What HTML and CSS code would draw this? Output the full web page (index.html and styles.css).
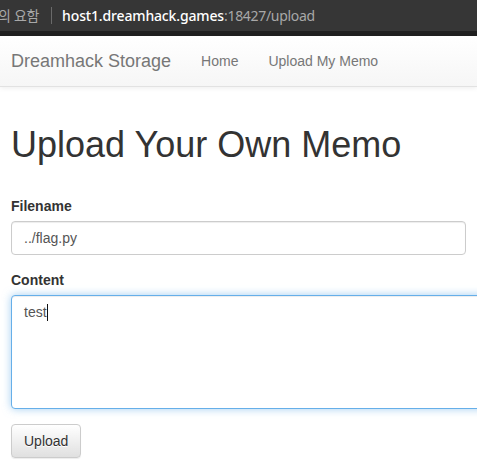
FILE: index.html
```html
<!DOCTYPE html>
<html lang="ko">
<head>
<meta charset="utf-8">
<title>Dreamhack Storage</title>
<link rel="stylesheet" href="styles.css">
</head>
<body>
<div class="browserbar">
  <div class="addr">
    <span class="dim">의 요함</span>
    <span class="sep"></span>
    <span class="host">host1.dreamhack.games</span><span class="dim">:18427/upload</span>
  </div>
</div>
<div class="browserstrip"></div>
<nav class="navbar">
  <a class="brand" href="#">Dreamhack Storage</a>
  <ul class="nav">
    <li><a href="#">Home</a></li>
    <li><a href="#">Upload My Memo</a></li>
  </ul>
</nav>
<main class="container">
  <h1>Upload Your Own Memo</h1>
  <form class="form">
    <div class="form-group">
      <label class="label" for="filename">Filename</label>
      <input class="input" id="filename" type="text" value="../flag.py">
    </div>
    <div class="form-group">
      <label class="label">Content</label>
      <div class="textarea focused" role="textbox">test<span class="caret"></span></div>
    </div>
    <button class="btn" type="button">Upload</button>
  </form>
</main>
</body>
</html>
```
FILE: styles.css
```css
* { box-sizing: border-box; }
html, body { margin: 0; padding: 0; }
body {
  width: 477px;
  height: 468px;
  overflow: hidden;
  background: #fff;
  font-family: "Liberation Sans", Arial, sans-serif;
  font-size: 14px;
  line-height: 20px;
  color: #333;
}
.browserbar {
  height: 31px;
  background: #363636;
  display: flex;
  align-items: center;
}
.addr {
  display: flex;
  align-items: center;
  font-family: "Noto Sans", "Noto Sans CJK KR", sans-serif;
  font-size: 14px;
  letter-spacing: -0.3px;
  white-space: nowrap;
  margin-left: -2px;
}
.addr .dim { color: #a8a8a8; }
.addr .host { color: #fff; font-weight: 500; letter-spacing: -0.15px; }
.addr .sep {
  width: 1px;
  height: 17px;
  background: #6a6a6a;
  margin: 0 10px 0 12px;
}
.browserstrip {
  height: 5px;
  background: #202020;
}
.navbar {
  height: 51px;
  display: flex;
  align-items: center;
  background: linear-gradient(to bottom, #fff 0, #f6f6f6 100%);
  border-bottom: 1px solid #e2e2e2;
  box-shadow: 0 1px 5px rgba(0,0,0,.075);
}
.brand {
  font-size: 18px;
  line-height: 20px;
  color: #777;
  text-decoration: none;
  margin-left: 11px;
  margin-right: 15px;
  padding: 15px 0;
}
.nav {
  list-style: none;
  margin: 0;
  padding: 0;
  display: flex;
}
.nav a {
  display: block;
  padding: 15px;
  color: #777;
  text-decoration: none;
}
.container {
  padding: 0 11px;
}
h1 {
  font-size: 36px;
  font-weight: 500;
  line-height: 1.1;
  margin: 38px 0 31px;
  color: #333;
  white-space: nowrap;
}
.form-group { margin-bottom: 15px; }
.label {
  display: block;
  font-weight: bold;
  margin-bottom: 5px;
}
.input {
  display: block;
  width: 455px;
  height: 34px;
  padding: 6px 12px;
  font-family: inherit;
  font-size: 14px;
  color: #555;
  background: #fff;
  border: 1px solid #ccc;
  border-radius: 4px;
  box-shadow: inset 0 1px 1px rgba(0,0,0,.075);
  outline: none;
}
.textarea {
  width: 520px;
  height: 114px;
  padding: 6px 12px;
  color: #555;
  background: #fff;
  border: 1px solid #66afe9;
  border-radius: 4px;
  box-shadow: inset 0 1px 1px rgba(0,0,0,.075), 0 0 8px rgba(102,175,233,.6);
}
.caret {
  display: inline-block;
  width: 1px;
  height: 17px;
  background: #111;
  vertical-align: -4px;
}
.btn {
  display: inline-block;
  height: 34px;
  padding: 6px 12px;
  font-family: inherit;
  font-size: 14px;
  line-height: 20px;
  color: #333;
  background: linear-gradient(to bottom, #fff 0, #e0e0e0 100%);
  border: 1px solid #ccc;
  border-radius: 4px;
  text-shadow: 0 1px 0 #fff;
  box-shadow: inset 0 1px 0 rgba(255,255,255,.15), 0 1px 1px rgba(0,0,0,.075);
}
```
